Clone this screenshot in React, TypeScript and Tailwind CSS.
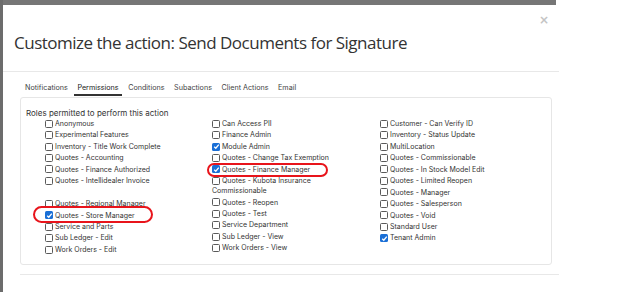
import React from "react";

const col1: (string | null)[] = [
  "Anonymous",
  "Experimental Features",
  "Inventory - Title Work Complete",
  "Quotes - Accounting",
  "Quotes - Finance Authorized",
  "Quotes - Intellidealer Invoice",
  null,
  "Quotes - Regional Manager",
  "*Quotes - Store Manager",
  "Service and Parts",
  "Sub Ledger - Edit",
  "Work Orders - Edit",
];

const col2: (string | null)[] = [
  "Can Access PII",
  "Finance Admin",
  "*Module Admin",
  "Quotes - Change Tax Exemption",
  "*Quotes - Finance Manager",
  "Quotes - Kubota Insurance",
  "~Commissionable",
  "Quotes - Reopen",
  "Quotes - Test",
  "Service Department",
  "Sub Ledger - View",
  "Work Orders - View",
];

const col3: (string | null)[] = [
  "Customer - Can Verify ID",
  "Inventory - Status Update",
  "MultiLocation",
  "Quotes - Commissionable",
  "Quotes - In Stock Model Edit",
  "Quotes - Limited Reopen",
  "Quotes - Manager",
  "Quotes - Salesperson",
  "Quotes - Void",
  "Standard User",
  "*Tenant Admin",
];

function Box({ checked }: { checked: boolean }) {
  if (checked) {
    return (
      <span className="inline-flex h-[8px] w-[8px] shrink-0 items-center justify-center rounded-[1.5px] bg-[#1a6fd6]">
        <svg width="7" height="7" viewBox="0 0 8 8">
          <path d="M1.4 4.2 L3.2 6 L6.6 1.8" stroke="white" strokeWidth="1.5" fill="none" />
        </svg>
      </span>
    );
  }
  return <span className="inline-block h-[8px] w-[8px] shrink-0 rounded-[1.5px] border border-[#5a5a5a] bg-white" />;
}

function Row({ item }: { item: string | null }) {
  if (item === null) return <div className="h-[11.45px]" />;
  if (item.startsWith("~")) {
    return <div className="-mt-[1.5px] h-[11.45px] leading-[11.45px] whitespace-nowrap">{item.slice(1)}</div>;
  }
  const checked = item.startsWith("*");
  const text = checked ? item.slice(1) : item;
  return (
    <div className="flex h-[11.45px] items-center gap-[2px] whitespace-nowrap leading-[11.45px]">
      <Box checked={checked} />
      <span>{text}</span>
    </div>
  );
}

function Col({ items, w }: { items: (string | null)[]; w: string }) {
  return (
    <div className={`flex flex-col ${w}`}>
      {items.map((it, i) => (
        <Row key={i} item={it} />
      ))}
    </div>
  );
}

export default function App() {
  const tabs = ["Notifications", "Permissions", "Conditions", "Subactions", "Client Actions", "Email"];
  return (
    <div className="relative flex h-[292px] w-[624px] overflow-hidden bg-white">
      <div className="w-[3px] shrink-0 bg-[#6c6c6c]" />
      <div className="flex flex-1 flex-col">
        <div className="h-[5px] w-[553px] shrink-0 bg-[#767676]" />
        <div className="relative flex w-[556px] flex-col">
          <div className="h-[67px] border-b border-[#e8e8e8] pl-[11px] pt-[26px]">
            <div
              className="text-[17px] leading-[24px] tracking-[-0.5px] text-[#333]"
              style={{ fontFamily: '"Open Sans", sans-serif' }}
            >
              Customize the action: Send Documents for Signature
            </div>
          </div>
          <div
            className="absolute right-[10px] top-[8px] text-[12px] font-bold leading-[14px] text-[#c4c4c4]"
            style={{ fontFamily: '"DejaVu Sans", sans-serif' }}
          >
            ×
          </div>
          <div className="flex flex-col pl-[17px] pt-[11px]" style={{ fontFamily: "Inter, sans-serif" }}>
            <div className="flex gap-[3.5px] pl-[2px] text-[7.2px] text-[#444]">
              {tabs.map((t) => (
                <div
                  key={t}
                  className={`px-[3px] pb-[1px] leading-[10px] ${
                    t === "Permissions" ? "border-b-2 border-[#333] text-[#222]" : "border-b-2 border-transparent"
                  }`}
                >
                  {t}
                </div>
              ))}
            </div>
            <div className="mt-[1px] w-[532px] rounded-[3px] border border-[#e6e6e6] pb-[9px] pl-[5px] pt-[10px] text-[#333]">
              <div className="text-[8px] leading-[10px]">Roles permitted to perform this action</div>
              <div className="flex pl-[19px] text-[7px]">
                <Col items={col1} w="w-[167px]" />
                <Col items={col2} w="w-[168px]" />
                <Col items={col3} w="flex-1" />
              </div>
            </div>
            <div className="mt-[9px] border-t border-[#e8e8e8]" />
          </div>
        </div>
      </div>
      <div className="absolute left-[207px] top-[163px] h-[14px] w-[121px] rounded-[8px] border-2 border-[#e8141b]" />
      <div className="absolute left-[33px] top-[206px] h-[17px] w-[120px] rounded-[9px] border-2 border-[#e8141b]" />
    </div>
  );
}
